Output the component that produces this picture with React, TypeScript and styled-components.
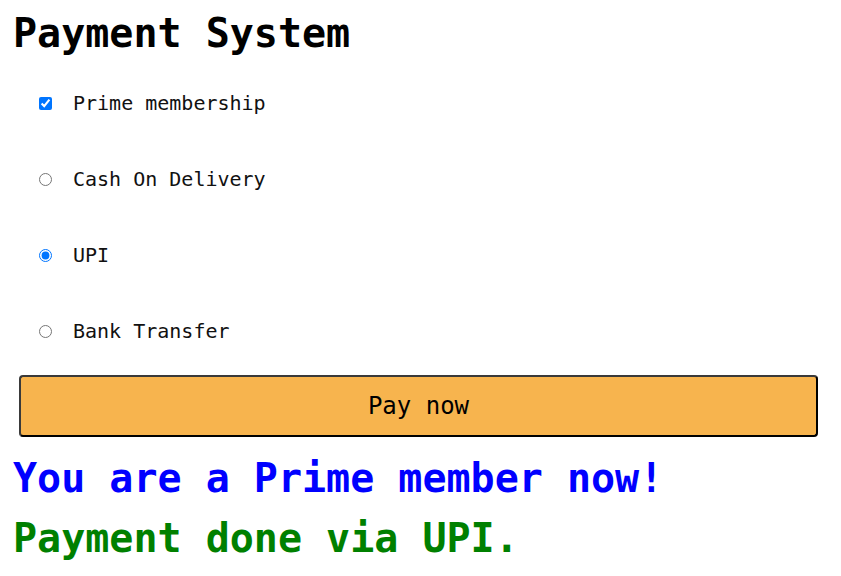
import React, { useState } from 'react';
import styled, { createGlobalStyle } from 'styled-components';

const GlobalStyle = createGlobalStyle`
  body {
    margin: 8px;
    background: #ffffff;
    font-family: "DejaVu Sans Mono", "Liberation Mono", monospace;
  }
`;

const Title = styled.h1`
  font-size: 40px;
  font-weight: bold;
  margin: 2px 0 36px;
  padding-left: 5px;
  line-height: 46px;
  color: #000;
`;

const Options = styled.div`
  display: flex;
  flex-direction: column;
  gap: 54px;
  padding-left: 31px;
`;

const Option = styled.label`
  display: flex;
  align-items: center;
  gap: 21px;
  height: 22px;
  font-size: 20px;
  color: #111;
  cursor: pointer;

  input {
    margin: 0;
    width: 13px;
    height: 13px;
  }
`;

const PayButton = styled.button`
  display: block;
  width: 799px;
  height: 62px;
  margin: 33px 0 0 11px;
  background: #f7b44e;
  border: 2px solid #3a3a3a;
  border-bottom-color: #000;
  border-right-color: #000;
  border-radius: 4px;
  font-family: "DejaVu Sans Mono", monospace;
  font-size: 24px;
  color: #000;
  cursor: pointer;
`;

const Message = styled.div<{ $color: string }>`
  font-size: 40px;
  font-weight: bold;
  line-height: 60px;
  padding-left: 5px;
  color: ${(p) => p.$color};
`;

const Messages = styled.div`
  margin-top: 11px;
`;

const methods = ['Cash On Delivery', 'UPI', 'Bank Transfer'];

export default function App() {
  const [prime, setPrime] = useState(true);
  const [method, setMethod] = useState('UPI');

  return (
    <>
      <GlobalStyle />
      <Title>Payment System</Title>
      <Options>
        <Option>
          <input type="checkbox" checked={prime} onChange={(e) => setPrime(e.target.checked)} />
          Prime membership
        </Option>
        {methods.map((m) => (
          <Option key={m}>
            <input type="radio" name="pay" checked={method === m} onChange={() => setMethod(m)} />
            {m}
          </Option>
        ))}
      </Options>
      <PayButton>Pay now</PayButton>
      <Messages>
        {prime && <Message $color="#0000ff">You are a Prime member now!</Message>}
        <Message $color="#008000">Payment done via {method}.</Message>
      </Messages>
    </>
  );
}
